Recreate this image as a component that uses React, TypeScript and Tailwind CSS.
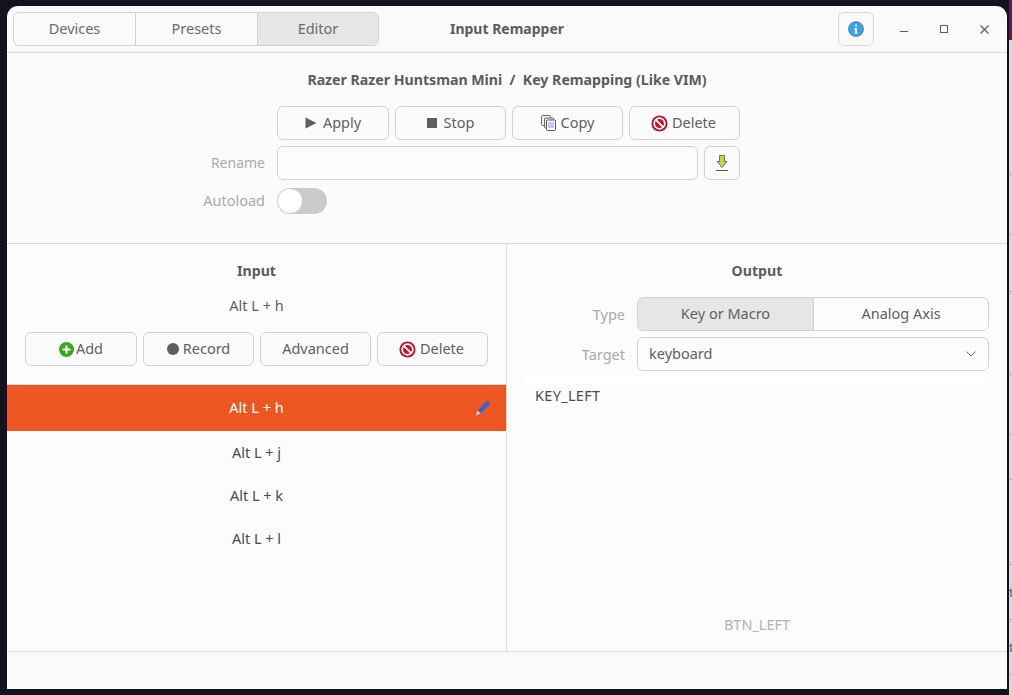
import type { ReactNode } from 'react';

const DeleteIcon = () => (
  <svg width="17" height="17" viewBox="0 0 16 16" className="shrink-0">
    <circle cx="8" cy="8" r="7.6" fill="#c4112f" />
    <circle cx="8" cy="8" r="5" fill="none" stroke="#fff" strokeWidth="1.6" />
    <path d="M4.6 4.6l6.8 6.8" stroke="#fff" strokeWidth="1.6" />
  </svg>
);

const CopyIcon = () => (
  <svg width="15" height="16" viewBox="0 0 15 16" className="shrink-0">
    <rect x="0.5" y="0.5" width="9" height="10" rx="1" fill="#f3f3f3" stroke="#666" />
    <rect x="3.5" y="3" width="9" height="10" rx="1" fill="#eee" stroke="#666" />
    <rect x="5.5" y="5" width="9" height="10.5" rx="1" fill="#fff" stroke="#555" />
    <path d="M7 8h6M7 10h6M7 12h6" stroke="#8a8ae0" />
  </svg>
);

// the gap differs per button so it comes in with the width
const Btn = ({ children, className = '' }: { children: ReactNode; className?: string }) => (
  <div className={`h-[34px] flex items-center justify-center rounded-[6px] border border-[#d2d2d2] bg-[#fbfbfb] text-[#5f5f5f] ${className}`}>
    {children}
  </div>
);

const rows = ['Alt L + j', 'Alt L + k', 'Alt L + l'];

// desktop behind the window, only a sliver shows at the right edge
const sliver = [
  'h-[135px]',
  'h-[60px]',
  'h-[57px]',
  'h-[83px]',
  'h-[60px]',
  'h-[45px]',
  'h-[85px]',
];

const Fragment = () => (
  <div className="h-[55px] border-b border-[#b9b9b9] flex items-center overflow-hidden">
    <span className="text-[13px] leading-none text-[#3f5f80]">t</span>
  </div>
);

export default function App() {
  return (
    <div className="w-[1012px] h-[695px] overflow-hidden bg-[#13121f] flex text-[14.5px] font-['Noto_Sans',sans-serif]">
      <div className="w-[1000px] h-[683px] ml-[7px] mt-[6px] rounded-t-[11px] overflow-hidden bg-[#fafafa] flex flex-col">
        {/* header bar */}
        <div className="h-[47px] shrink-0 border-b border-[#d8d8d8] px-[6px] pt-[6px] flex items-start relative">
          <div className="flex w-[366px] h-[34px] rounded-[6px] border border-[#d2d2d2] overflow-hidden text-[#6b6b6b]">
            <div className="w-[122px] flex items-center justify-center border-r border-[#d2d2d2]">Devices</div>
            <div className="w-[122px] flex items-center justify-center border-r border-[#d2d2d2]">Presets</div>
            <div className="flex-1 flex items-center justify-center bg-[#e6e6e6]">Editor</div>
          </div>
          <div className="absolute left-0 right-0 top-[13px] text-center font-bold text-[#5c5c5c] text-[14px] leading-5">Input Remapper</div>
          <div className="ml-auto flex items-center">
            <div className="w-[36px] h-[34px] rounded-[6px] border border-[#d8d8d8] flex items-center justify-center">
              <svg width="16" height="16" viewBox="0 0 16 16">
                <circle cx="8" cy="8" r="7.6" fill="#35a3e6" stroke="#555" strokeWidth="0.5" />
                <path d="M6.400 7h2.600v4.400h1V12.600H6.200v-1.200h1V8.200h-.8zM7.200 3.600h1.800v2H7.200z" fill="#fff" />
              </svg>
            </div>
            <div className="w-[127px] h-[34px] pl-[26px] flex items-center gap-[32px]">
              <div className="w-[8px] h-[1px] mt-[5px] bg-[#5f5f5f]" />
              <div className="w-[8px] h-[8px] border border-[#5f5f5f]" />
              <svg width="9" height="9" viewBox="0 0 9 9"><path d="M.5.5l8 8M8.500.5l-8 8" stroke="#5f5f5f" strokeWidth="1.2" /></svg>
            </div>
          </div>
        </div>

        {/* preset section */}
        <div className="h-[191px] shrink-0 border-b border-[#d8d8d8] bg-[#fbfbfb] flex flex-col items-center">
          <div className="mt-[17px] h-[20px] leading-5 font-bold text-[14.15px] text-[#5c5c5c] whitespace-pre">Razer Razer Huntsman Mini  /  Key Remapping (Like VIM)</div>
          <div className="mt-[16px] w-[463px] ml-[3px] flex flex-col gap-[6px]">
            <div className="flex gap-[6px]">
              <Btn className="w-[112px] gap-[6px]">
                <svg width="12" height="12" viewBox="0 0 12 12"><path d="M0.500 0.500L11.500 6L0.500 11.500z" fill="#5f5f5f" /></svg>
                Apply
              </Btn>
              <Btn className="w-[111px] gap-[7px]">
                <div className="w-[10px] h-[10px] bg-[#5f5f5f]" />
                Stop
              </Btn>
              <Btn className="w-[111px] gap-[5px]"><CopyIcon />Copy</Btn>
              <Btn className="w-[111px] gap-[4px] pr-[2px]"><DeleteIcon />Delete</Btn>
            </div>
            <div className="flex gap-[6px] relative">
              <div className="absolute right-[475px] top-[7px] text-[14px] text-[#a9a9a9] leading-5">Rename</div>
              <div className="w-[421px] h-[34px] rounded-[6px] border border-[#d2d2d2] bg-[#fdfdfd]" />
              <Btn className="w-[36px]">
                <svg width="14" height="16" viewBox="0 0 14 16">
                  <path d="M4.500.5h5v6h2.500L7 12.500 2 6.500h2.500z" fill="#bcd64f" stroke="#555" strokeWidth="0.8" />
                  <path d="M1 15.500h12" stroke="#555" />
                </svg>
              </Btn>
            </div>
            <div className="relative mt-[2px]">
              <div className="absolute right-[475px] top-[2px] text-[#a9a9a9] leading-5">Autoload</div>
              <div className="w-[50px] h-[26px] rounded-full bg-[#cbcbcb] p-[1px]">
                <div className="w-[24px] h-[24px] rounded-full bg-white" />
              </div>
            </div>
          </div>
        </div>

        {/* main panels */}
        <div className="h-[408px] shrink-0 flex border-b border-[#dcdcdc] bg-[#fcfcfc]">
          <div className="w-[500px] border-r border-[#dcdcdc] flex flex-col">
            <div className="mt-[17px] text-center font-bold text-[14.15px] text-[#5c5c5c] leading-5">Input</div>
            <div className="mt-[14px] text-center text-[#5f5f5f] leading-5">Alt L + h</div>
            <div className="mt-[17px] px-[18px] flex gap-[6px]">
              <Btn className="w-[112px] gap-[2px]">
                <svg width="15" height="15" viewBox="0 0 15 15">
                  <circle cx="7.500" cy="7.500" r="7.500" fill="#3aa620" />
                  <path d="M7.500 3.500v8M3.500 7.500h8" stroke="#fff" strokeWidth="2" />
                </svg>
                Add
              </Btn>
              <Btn className="w-[111px] gap-[4px]">
                <div className="w-[12px] h-[12px] rounded-full bg-[#5f5f5f]" />
                Record
              </Btn>
              <Btn className="w-[111px]">Advanced</Btn>
              <Btn className="w-[111px] gap-[4px] pr-[2px]"><DeleteIcon />Delete</Btn>
            </div>
            <div className="mt-[18px] h-[47px] border-t border-[#d8d8d8] bg-[#ec5620] text-white flex items-center justify-center relative">
              Alt L + h
              <svg className="absolute right-[15px] top-[15px]" width="16" height="16" viewBox="0 0 16 16">
                <path d="M12.500 0.500L15.500 3.500L5.500 13.500L2.500 10.500z" fill="#2d62d8" />
                <path d="M2.500 10.500L5.500 13.500L0.500 15.500z" fill="#f1d3b0" />
              </svg>
            </div>
            <div className="flex flex-col text-[#4a4a4a]">
              {rows.map((r) => (
                <div key={r} className="h-[43px] flex items-center justify-center">{r}</div>
              ))}
            </div>
          </div>
          <div className="flex-1 flex flex-col px-[18px]">
            <div className="mt-[17px] text-center font-bold text-[14.15px] text-[#5c5c5c] leading-5">Output</div>
            <div className="mt-[16px] pl-[112px] flex flex-col gap-[6px] relative">
              <div className="flex h-[34px] rounded-[6px] border border-[#d2d2d2] overflow-hidden text-[#5f5f5f]">
                <div className="w-[176px] flex items-center justify-center bg-[#e6e6e6] border-r border-[#d2d2d2]">Key or Macro</div>
                <div className="flex-1 flex items-center justify-center">Analog Axis</div>
              </div>
              <div className="h-[34px] rounded-[6px] border border-[#d2d2d2] flex items-center justify-between pl-[11px] pr-[12px] text-[#5f5f5f]">
                keyboard
                <svg width="10" height="6" viewBox="0 0 10 6"><path d="M.5.500L5 5 9.500.500" fill="none" stroke="#666" /></svg>
              </div>
              <div className="absolute right-[364px] top-[7px] text-[#a9a9a9] leading-5">Type</div>
              <div className="absolute right-[364px] top-[47px] text-[#a9a9a9] leading-5">Target</div>
            </div>
            <div className="mt-[6px] h-[37px] pl-[10px] flex items-center bg-white/70 text-[#4a4a4a] tracking-[0.3px]">KEY_LEFT</div>
            <div className="mt-auto mb-[17px] text-center text-[#b3b3b3] leading-5">BTN_LEFT</div>
          </div>
        </div>

        <div className="flex-1 bg-[#fafafa]" />
      </div>
      <div className="ml-[2px] w-[3px] h-full flex flex-col bg-[#d8d8d8]">
        <div className="h-[40px] shrink-0 bg-[#5b1c4e]" />
        {sliver.map((h) => (
          <div key={h + sliver.indexOf(h)} className={`${h} shrink-0 border-b border-[#b9b9b9]`} />
        ))}
        <Fragment />
        <Fragment />
      </div>
    </div>
  );
}
